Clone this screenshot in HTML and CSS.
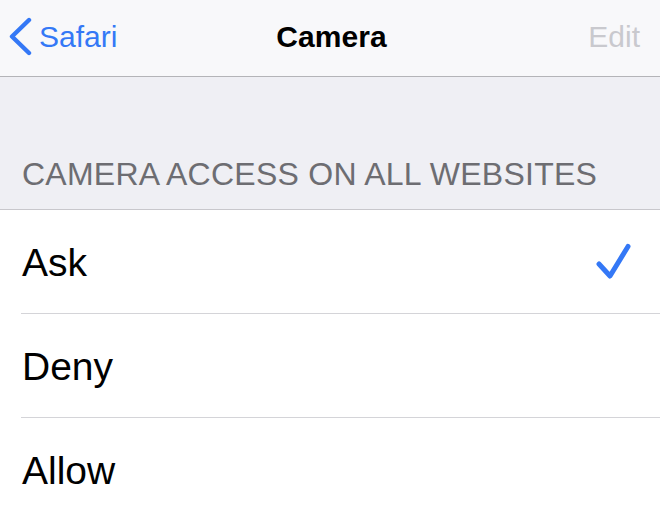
FILE: index.html
```html
<!DOCTYPE html>
<html lang="en">
<head>
<meta charset="utf-8">
<title>Camera</title>
<link rel="stylesheet" href="styles.css">
</head>
<body>
<div class="screen">
  <header class="navbar">
    <div class="nav-left">
      <svg class="chevron" width="24" height="40" viewBox="0 0 24 40" aria-hidden="true">
        <path d="M21 3 L4 19.5 L21 36" fill="none" stroke="#3478f6" stroke-width="4.4" stroke-linecap="round" stroke-linejoin="round"/>
      </svg>
      <span class="back-label">Safari</span>
    </div>
    <div class="nav-title">Camera</div>
    <div class="nav-right">Edit</div>
  </header>

  <div class="section-header">CAMERA ACCESS ON ALL WEBSITES</div>

  <ul class="list">
    <li class="row">
      <div class="row-inner">
        <span class="row-label">Ask</span>
        <svg class="check" width="40" height="40" viewBox="0 0 40 40" aria-hidden="true">
          <path d="M6 22 L17 34 L35 4.5" fill="none" stroke="#3478f6" stroke-width="5" stroke-linecap="round" stroke-linejoin="round"/>
        </svg>
      </div>
    </li>
    <li class="row">
      <div class="row-inner">
        <span class="row-label">Deny</span>
      </div>
    </li>
    <li class="row">
      <div class="row-inner">
        <span class="row-label">Allow</span>
      </div>
    </li>
  </ul>
</div>
</body>
</html>
```

FILE: styles.css
```css
* {
  box-sizing: border-box;
}

html, body {
  margin: 0;
  padding: 0;
  background: #ffffff;
}

body {
  font-family: "Liberation Sans", Arial, sans-serif;
  overflow: hidden;
}

.screen {
  width: 660px;
  height: 508px;
  overflow: hidden;
  background: #ffffff;
}

.navbar {
  height: 77px;
  padding: 0 20px 3px 20px;
  background: #f8f8fa;
  border-bottom: 1px solid #b4b4b8;
  display: grid;
  grid-template-columns: 1fr auto 1fr;
  align-items: center;
}

.nav-left {
  display: flex;
  align-items: center;
  gap: 7px;
  margin-left: -12px;
}

.chevron {
  display: block;
}

.back-label {
  font-size: 30px;
  line-height: 34px;
  color: #3478f6;
}

.nav-title {
  font-size: 30px;
  line-height: 34px;
  font-weight: bold;
  color: #000000;
  letter-spacing: 0.1px;
  padding-left: 3px;
}

.nav-right {
  justify-self: end;
  font-size: 30px;
  line-height: 34px;
  color: #c9c9ce;
}

.section-header {
  background: #efeff4;
  padding: 78px 0 16px 22px;
  font-size: 32px;
  line-height: 38px;
  letter-spacing: 0.25px;
  color: #6d6d72;
  border-bottom: 1px solid #c8c7cc;
}

.list {
  list-style: none;
  margin: 0;
  padding: 0;
  background: #ffffff;
}

.row {
  padding-left: 21px;
}

.row-inner {
  height: 104px;
  display: flex;
  align-items: center;
  justify-content: space-between;
  padding: 3px 27px 0 1px;
  border-bottom: 1px solid #d4d4d8;
}

.row-label {
  font-size: 39px;
  line-height: 44px;
  color: #000000;
}

.check {
  display: block;
  margin-top: -3px;
}
```
